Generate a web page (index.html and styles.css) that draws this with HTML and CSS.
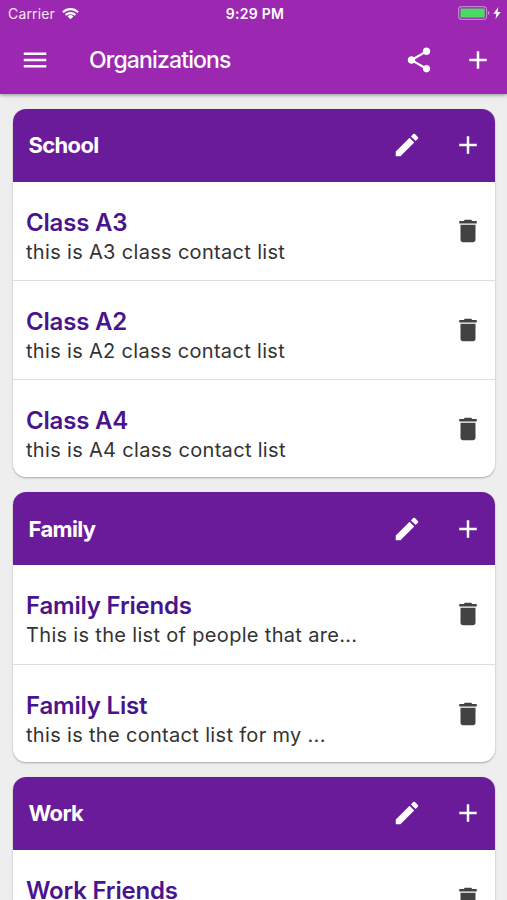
FILE: index.html
```html
<!DOCTYPE html>
<html lang="en">
<head>
<meta charset="utf-8">
<meta name="viewport" content="width=device-width, initial-scale=1">
<title>Organizations</title>
<link rel="stylesheet" href="styles.css">
</head>
<body>
<svg class="defs" aria-hidden="true">
  <symbol id="menu" viewBox="0 0 24 24"><path d="M3 18h18v-2H3v2zm0-5h18v-2H3v2zm0-7v2h18V6H3z"/></symbol>
  <symbol id="share" viewBox="0 0 24 24"><path d="M18 16.08c-.76 0-1.44.3-1.96.77L8.91 12.7c.05-.23.09-.46.09-.7s-.04-.47-.09-.7l7.05-4.11c.54.5 1.25.81 2.04.81 1.66 0 3-1.34 3-3s-1.34-3-3-3-3 1.34-3 3c0 .24.04.47.09.7L8.04 9.81C7.5 9.31 6.79 9 6 9c-1.66 0-3 1.34-3 3s1.34 3 3 3c.79 0 1.5-.31 2.04-.81l7.12 4.16c-.05.21-.08.43-.08.65 0 1.61 1.31 2.92 2.92 2.92s2.92-1.31 2.92-2.92-1.31-2.92-2.92-2.92z"/></symbol>
  <symbol id="add" viewBox="0 0 24 24"><path d="M19 13h-6v6h-2v-6H5v-2h6V5h2v6h6v2z"/></symbol>
  <symbol id="edit" viewBox="0 0 24 24"><path d="M3 17.25V21h3.75L17.81 9.94l-3.75-3.75L3 17.25zM20.71 7.04c.39-.39.39-1.02 0-1.41l-2.34-2.34c-.39-.39-1.02-.39-1.41 0l-1.83 1.83 3.75 3.75 1.83-1.83z"/></symbol>
  <symbol id="delete" viewBox="0 0 24 24"><path d="M6 19c0 1.100.9 2 2 2h8c1.100 0 2-.9 2-2V7H6v12zM19 4h-3.500l-1-1h-5l-1 1H5v2h14V4z"/></symbol>
</svg>
<header class="app-bar">
  <div class="status">
    <div class="carrier"><span>Carrier</span>
      <svg class="wifi" viewBox="0 0 18 13"><g fill="none" stroke="currentColor" stroke-width="2.300"><path d="M1 5.200a11.300 11.300 0 0 1 16 0"/><path d="M3.800 8.200a7.300 7.300 0 0 1 10.400 0"/></g><path d="M9 12.700 5.900 9.700a4.400 4.400 0 0 1 6.200 0z"/></svg>
    </div>
    <span class="time">9:29 PM</span>
    <div class="power">
      <svg class="battery" viewBox="0 0 32 14"><rect class="case" x=".6" y=".6" width="28" height="12.800" rx="3.200"/><rect class="charge" x="2.400" y="2.400" width="24.400" height="9.200" rx="1.200"/><path class="cap" d="M30 4.800q3.200 2.200 0 4.400z"/></svg>
      <svg class="bolt" viewBox="0 0 8 12"><path d="M5.300 0 .4 6.700h3L2.500 12 7.700 5H4.600z"/></svg>
    </div>
  </div>
  <div class="toolbar">
    <svg class="icon"><use href="#menu"/></svg>
    <h1>Organizations</h1>
    <svg class="icon share"><use href="#share"/></svg>
    <svg class="icon"><use href="#add"/></svg>
  </div>
</header>
<main>
  <section class="card">
    <div class="card-head"><h2>School</h2><svg class="icon"><use href="#edit"/></svg><svg class="icon"><use href="#add"/></svg></div>
    <div class="row"><div><h3>Class A3</h3><p>this is A3 class contact list</p></div><svg class="icon"><use href="#delete"/></svg></div>
    <div class="row"><div><h3>Class A2</h3><p>this is A2 class contact list</p></div><svg class="icon"><use href="#delete"/></svg></div>
    <div class="row"><div><h3>Class A4</h3><p>this is A4 class contact list</p></div><svg class="icon"><use href="#delete"/></svg></div>
  </section>
  <section class="card">
    <div class="card-head"><h2>Family</h2><svg class="icon"><use href="#edit"/></svg><svg class="icon"><use href="#add"/></svg></div>
    <div class="row"><div><h3>Family Friends</h3><p>This is the list of people that are...</p></div><svg class="icon"><use href="#delete"/></svg></div>
    <div class="row"><div><h3>Family List</h3><p>this is the contact list for my ...</p></div><svg class="icon"><use href="#delete"/></svg></div>
  </section>
  <section class="card">
    <div class="card-head"><h2>Work</h2><svg class="icon"><use href="#edit"/></svg><svg class="icon"><use href="#add"/></svg></div>
    <div class="row"><div><h3>Work Friends</h3></div><svg class="icon"><use href="#delete"/></svg></div>
  </section>
</main>
</body>
</html>
```
FILE: styles.css
```css
* { box-sizing: border-box; }
html, body { height: 100%; }
body {
  margin: 0;
  height: 900px;
  overflow: hidden;
  background: #eee;
  font-family: Inter, "Liberation Sans", sans-serif;
  display: flex;
  flex-direction: column;
}
h1, h2, h3, p { margin: 0; white-space: nowrap; }
.defs { display: none; }
svg { fill: currentColor; flex: none; }
.icon { width: 30px; height: 30px; }

.app-bar {
  position: relative;
  flex: none;
  height: 94px;
  background: #9c27b0;
  color: #fff;
  box-shadow: 0 1px 4px rgba(0, 0, 0, .4);
}
.status {
  height: 27px;
  padding: 0 5px 0 8px;
  display: grid;
  grid-template-columns: 1fr auto 1fr;
  align-items: center;
  font-size: 14px;
}
.carrier { display: flex; align-items: center; gap: 7px; letter-spacing: .15px; color: #f6e6f8; }
.wifi { width: 17px; height: 13px; margin-top: -1px; color: #fff; }
.time { font-weight: 600; letter-spacing: .3px; }
.power { display: flex; justify-content: flex-end; align-items: center; gap: 3px; margin-right: 1px; }
.battery { width: 32px; height: 14px; margin-top: -1px; }
.case { fill: none; stroke: #c87fd3; stroke-width: 1.2; }
.charge { fill: #4cd964; }
.cap { fill: #c87fd3; }
.bolt { width: 8px; height: 12px; margin-top: -1px; }
.toolbar {
  height: 65px;
  padding: 0 14.5px 0 20px;
  display: flex;
  align-items: center;
}
.toolbar h1 {
  flex: 1;
  margin-left: 39px;
  font-size: 23px;
  font-weight: 500;
  letter-spacing: -.85px;
}
.share { margin-right: 28.5px; }

main {
  flex: 1;
  min-height: 0;
  overflow: hidden;
  padding: 14.6px 12px 0 13px;
  display: flex;
  flex-direction: column;
  gap: 14.5px;
}
.card {
  flex: none;
  background: #fff;
  border-radius: 13px;
  box-shadow: 0 1px 2px rgba(0, 0, 0, .3);
}
.card-head {
  height: 73.1px;
  padding: 0 12.3px 0 15.5px;
  display: flex;
  align-items: center;
  gap: 31px;
  background: #6a1b9a;
  color: #fff;
  border-radius: 13px 13px 0 0;
}
.card-head h2 { flex: 1; font-size: 22px; font-weight: 700; letter-spacing: -.65px; }
.row {
  height: 98.6px;
  padding: 0 12.3px 0 13px;
  display: flex;
  justify-content: space-between;
  align-items: flex-start;
  color: #424242;
}
.row + .row { border-top: 1px solid #dedede; }
.row > div { padding-top: 26px; }
.row .icon { margin-top: 34px; }
.row h3 {
  font-size: 24px;
  line-height: 30px;
  font-weight: 600;
  color: #4a148c;
  letter-spacing: -.2px;
}
.row p {
  font-size: 20px;
  line-height: 28px;
  letter-spacing: .32px;
  color: #333;
}
```
